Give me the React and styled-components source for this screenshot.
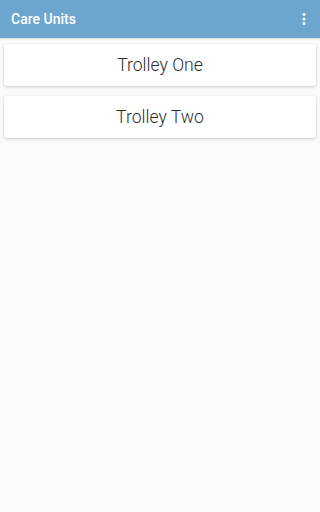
import React from "react";
import styled, { createGlobalStyle } from "styled-components";

const Global = createGlobalStyle`
  html, body { margin: 0; padding: 0; background: #fafafa; }
  body { font-family: Roboto, "Noto Sans", sans-serif; }
  #root { min-height: 100vh; background: #fafafa; }
`;

const Page = styled.div`
  display: flex;
  flex-direction: column;
  min-height: 100vh;
  background: #fafafa;
`;

const Toolbar = styled.header`
  display: flex;
  align-items: center;
  justify-content: space-between;
  height: 38px;
  padding: 0 9px 0 11px;
  background: #6ca6ce;
  box-shadow: 0 1px 2px rgba(0, 0, 0, 0.15);
`;

const Title = styled.h1`
  margin: 0;
  font-size: 14px;
  font-weight: 500;
  color: #fff;
  font-family: Roboto, sans-serif;
`;

const MenuButton = styled.button`
  display: flex;
  align-items: center;
  justify-content: center;
  width: 14px;
  height: 24px;
  padding: 0;
  border: none;
  background: transparent;
`;

const List = styled.div`
  display: flex;
  flex-direction: column;
  gap: 10px;
  padding: 6px 4px;
`;

const Card = styled.div`
  display: flex;
  align-items: center;
  justify-content: center;
  height: 42px;
  background: #fff;
  border-radius: 2px;
  box-shadow: 0 1px 3px rgba(0, 0, 0, 0.18), 0 0 1px rgba(0, 0, 0, 0.1);
  font-family: Roboto, sans-serif;
  font-weight: 300;
  font-size: 17.6px;
  color: #2e2e2e;
`;

export default function App() {
  return (
    <>
      <Global />
      <Page>
        <Toolbar>
          <Title>Care Units</Title>
          <MenuButton aria-label="menu">
            <svg width="4" height="14" viewBox="0 0 4 14">
              <circle cx="2" cy="2.5" r="1.5" fill="#fff" />
              <circle cx="2" cy="7" r="1.5" fill="#fff" />
              <circle cx="2" cy="11.5" r="1.5" fill="#fff" />
            </svg>
          </MenuButton>
        </Toolbar>
        <List>
          <Card>Trolley One</Card>
          <Card>Trolley Two</Card>
        </List>
      </Page>
    </>
  );
}
